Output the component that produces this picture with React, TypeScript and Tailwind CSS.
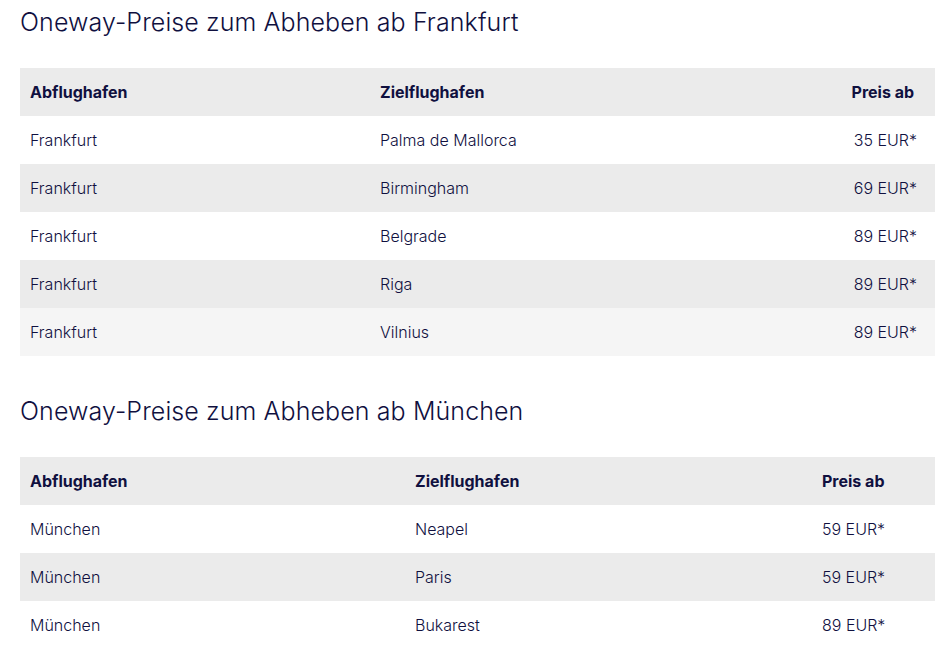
const frankfurt = [
  { from: "Frankfurt", to: "Palma de Mallorca", price: "35 EUR*" },
  { from: "Frankfurt", to: "Birmingham", price: "69 EUR*" },
  { from: "Frankfurt", to: "Belgrade", price: "89 EUR*" },
  { from: "Frankfurt", to: "Riga", price: "89 EUR*" },
  { from: "Frankfurt", to: "Vilnius", price: "89 EUR*" },
];

const muenchen = [
  { from: "München", to: "Neapel", price: "59 EUR*" },
  { from: "München", to: "Paris", price: "59 EUR*" },
  { from: "München", to: "Bukarest", price: "89 EUR*" },
];

type Row = { from: string; to: string; price: string };

function rowBg(i: number, count: number, hoverLast: boolean) {
  if (hoverLast && i === count - 1) return "bg-[#f5f5f5]";
  return i % 2 === 1 ? "bg-[#ebebeb]" : "bg-white";
}

function FareTable({
  title,
  rows,
  cols,
  priceRight,
  hoverLast = false,
}: {
  title: string;
  rows: Row[];
  cols: string;
  priceRight: boolean;
  hoverLast?: boolean;
}) {
  const priceCls = priceRight ? "text-right pr-[18px]" : "text-left";
  return (
    <section>
      <h2 className="text-[25px] leading-[32px] font-light tracking-[0.1px]">{title}</h2>
      <div className="mt-[30px]">
        <div className={`grid ${cols} h-[48px] items-center bg-[#ebebeb] font-bold`}>
          <div className="pl-[10px]">Abflughafen</div>
          <div className="pl-[10px]">Zielflughafen</div>
          <div className={`${priceCls} pr-[21px]`}>Preis ab</div>
        </div>
        {rows.map((r, i) => (
          <div
            key={r.to}
            className={`grid ${cols} h-[48px] items-center font-light ${rowBg(i, rows.length, hoverLast)}`}
          >
            <div className="pl-[10px]">{r.from}</div>
            <div className="pl-[10px]">{r.to}</div>
            <div className={priceCls}>{r.price}</div>
          </div>
        ))}
      </div>
    </section>
  );
}

export default function App() {
  return (
    <div className="min-h-[655px] bg-white pl-[20px] pt-[6px] text-[16px] text-[#10103f] font-['Inter',sans-serif]">
      <FareTable
        title="Oneway-Preise zum Abheben ab Frankfurt"
        rows={frankfurt}
        cols="grid-cols-[350px_1fr_200px]"
        priceRight
        hoverLast
      />
      <div className="mt-[39px]">
        <FareTable
          title="Oneway-Preise zum Abheben ab München"
          rows={muenchen}
          cols="grid-cols-[385px_417px_1fr]"
          priceRight={false}
        />
      </div>
    </div>
  );
}
